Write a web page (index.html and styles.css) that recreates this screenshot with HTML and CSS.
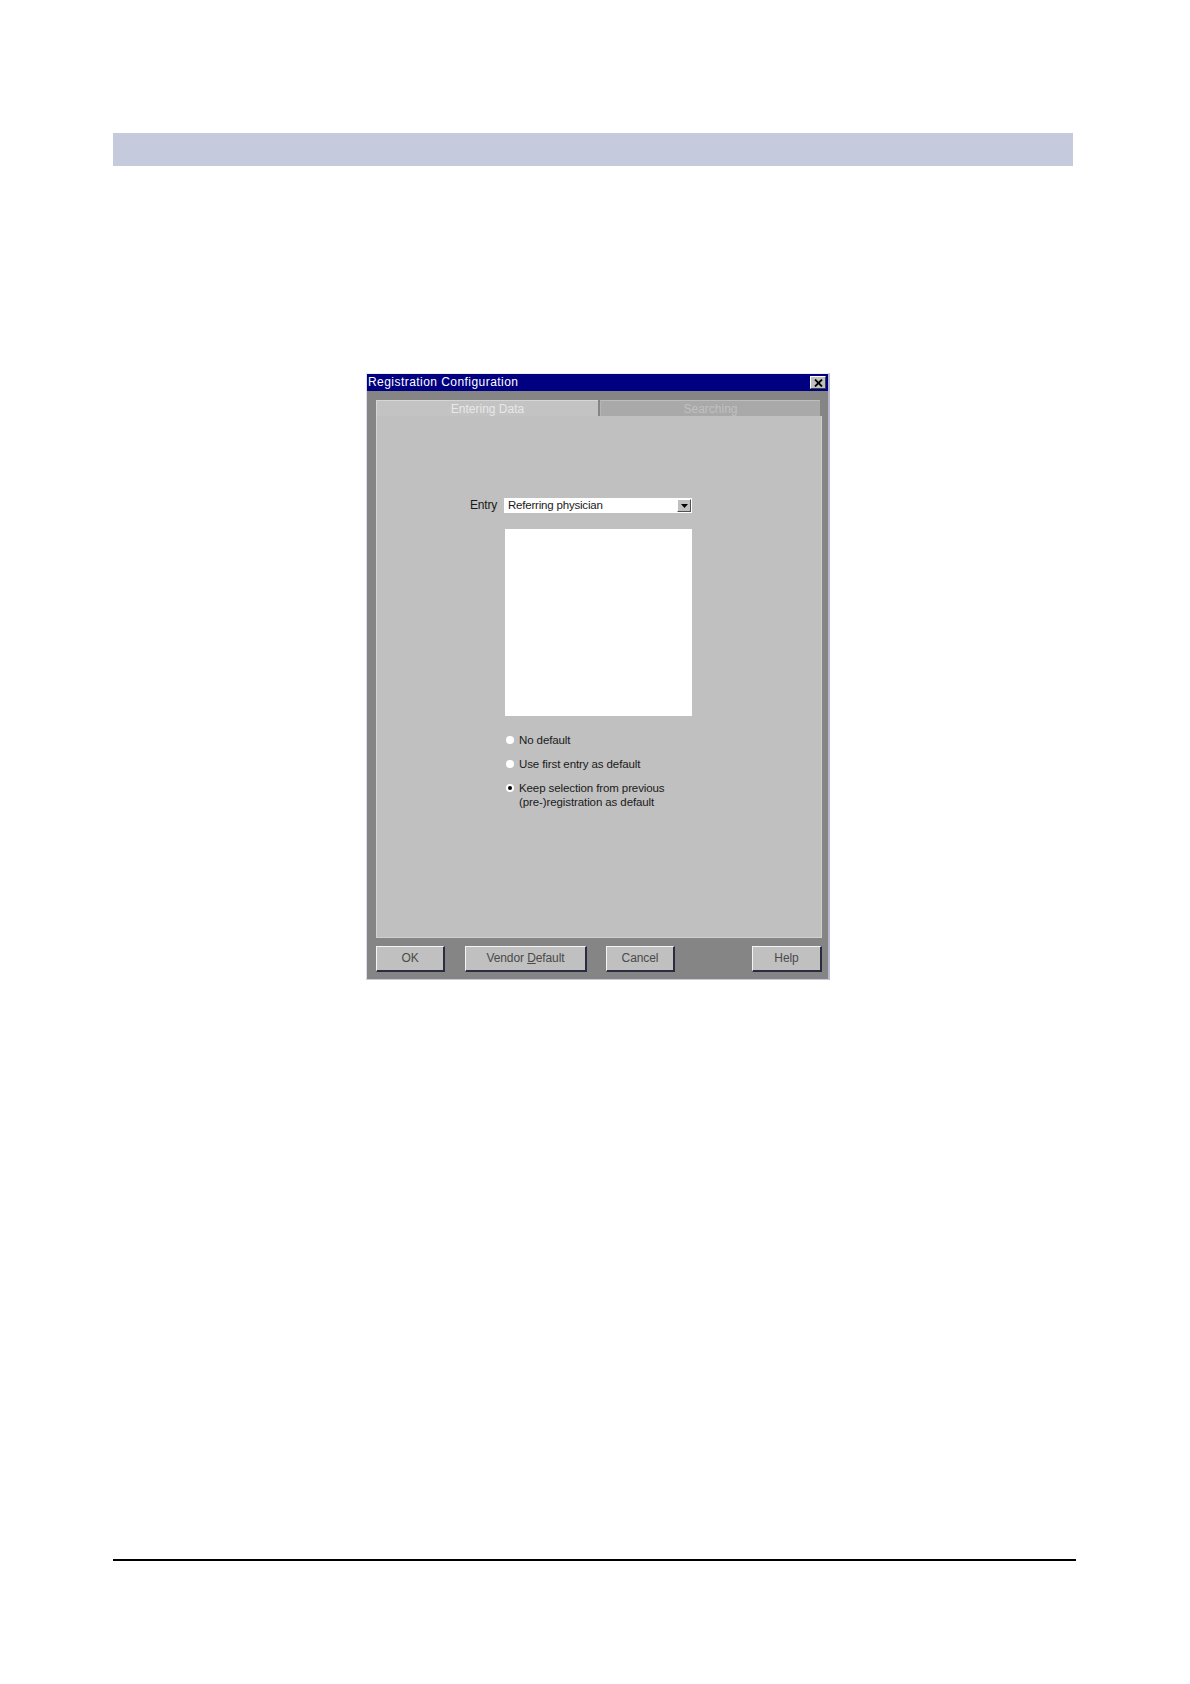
FILE: index.html
```html
<!DOCTYPE html>
<html>
<head>
<meta charset="utf-8">
<link rel="stylesheet" href="styles.css">
</head>
<body>
<div class="page">
  <div class="header-bar"></div>

  <div class="dialog">
    <div class="titlebar">
      <span class="title">Registration Configuration</span>
      <span class="close">
        <svg width="9" height="8" viewBox="0 0 9 8"><path d="M1 0.5 L8 7.5 M8 0.5 L1 7.5" stroke="#000" stroke-width="1.8" fill="none"/></svg>
      </span>
    </div>
    <div class="dlg-body">
      <div class="tabs">
        <div class="tab tab-active">Entering Data</div>
        <div class="tab tab-back">Searching</div>
      </div>
      <div class="panel">
        <div class="form">
          <label class="entry-label">Entry</label>
          <div class="combo">
            <span class="combo-text">Referring physician</span>
            <span class="drop">
              <svg width="7" height="4" viewBox="0 0 7 4"><path d="M0 0 H7 L3.5 4 Z" fill="#000"/></svg>
            </span>
          </div>
          <div class="listbox"></div>
          <div class="radios">
            <div class="radio"><span class="dot"></span><span class="rtext">No default</span></div>
            <div class="radio"><span class="dot"></span><span class="rtext">Use first entry as default</span></div>
            <div class="radio"><span class="dot dot-on"></span><span class="rtext">Keep selection from previous<br>(pre-)registration as default</span></div>
          </div>
        </div>
      </div>
      <div class="buttons">
        <div class="btn btn-ok">OK</div>
        <div class="btn btn-vendor">Vendor <u>D</u>efault</div>
        <div class="btn btn-cancel">Cancel</div>
        <div class="btn btn-help">Help</div>
      </div>
    </div>
  </div>

  <div class="footer-line"></div>
</div>
</body>
</html>
```

FILE: styles.css
```css
html, body {
  margin: 0;
  padding: 0;
  background: #ffffff;
  font-family: "Liberation Sans", Arial, sans-serif;
}

.page {
  padding-top: 133px;
  padding-left: 113px;
  width: 1077px;
  height: 1684px;
  box-sizing: border-box;
}

.header-bar {
  width: 960px;
  height: 33px;
  background: #c5cbdc;
}

.dialog {
  margin-top: 207px;
  margin-left: 253px;
  width: 464px;
  box-sizing: border-box;
  background: #858585;
  border-top: 1px solid #ececf4;
  border-left: 1px solid #dedeea;
  border-right: 2px solid #b8b8d0;
  border-bottom: 1px solid #c8c8dc;
}

.titlebar {
  height: 17px;
  background: #000080;
  display: flex;
  align-items: center;
  justify-content: space-between;
  padding: 0 2px 0 1px;
  color: #ffffff;
  font-size: 12px;
}

.title {
  line-height: 17px;
  letter-spacing: 0.45px;
}

.close {
  width: 14px;
  height: 11px;
  background: #c0c0c0;
  border-top: 1px solid #ffffff;
  border-left: 1px solid #ffffff;
  border-right: 1px solid #404040;
  border-bottom: 1px solid #404040;
  display: flex;
  align-items: center;
  justify-content: center;
}

.dlg-body {
  padding: 9px 6px 7px 9px;
}

.tabs {
  display: flex;
  height: 16px;
  gap: 2px;
  width: 444px;
}

.tab {
  box-sizing: border-box;
  height: 16px;
  font-size: 12px;
  line-height: 16px;
  text-align: center;
}

.tab-active {
  width: 222px;
  background: #c3c3c3;
  color: #e8e8e8;
  border-top: 1px solid #d6d6d6;
  border-left: 1px solid #d6d6d6;
}

.tab-back {
  width: 220px;
  background: #a9a9a9;
  color: #c0c0c0;
  border-top: 1px solid #bdbdbd;
  border-left: 1px solid #b5b5b5;
}

.panel {
  width: 446px;
  height: 522px;
  box-sizing: border-box;
  background: #c0c0c0;
  border-left: 1px solid #d4d4d4;
  border-right: 1px solid #d0d0d0;
  border-bottom: 1px solid #d0d0d0;
  padding-top: 82px;
}

.form {
  display: grid;
  grid-template-columns: 127px 188px;
  row-gap: 0;
  color: #1a1a1a;
  font-size: 12px;
}

.entry-label {
  justify-self: end;
  padding-right: 7px;
  line-height: 15px;
  letter-spacing: -0.2px;
}

.combo {
  width: 188px;
  height: 15px;
  background: #ffffff;
  display: flex;
  align-items: center;
  justify-content: space-between;
  box-sizing: border-box;
}

.combo-text {
  padding-left: 4px;
  font-size: 11.5px;
  line-height: 15px;
  letter-spacing: -0.2px;
}

.drop {
  width: 14px;
  height: 13px;
  box-sizing: border-box;
  margin-right: 1px;
  background: #c0c0c0;
  border-top: 1px solid #ffffff;
  border-left: 1px solid #ffffff;
  border-right: 1px solid #505050;
  border-bottom: 1px solid #505050;
  display: flex;
  align-items: center;
  justify-content: center;
}

.listbox {
  grid-column: 2;
  margin-top: 16px;
  margin-left: 1px;
  width: 187px;
  height: 187px;
  background: #ffffff;
}

.radios {
  grid-column: 2;
  margin-top: 17px;
  display: flex;
  flex-direction: column;
  gap: 10px;
}

.radio {
  display: flex;
  align-items: flex-start;
  font-size: 11.5px;
  line-height: 14px;
  letter-spacing: -0.1px;
}

.dot {
  width: 8px;
  height: 8px;
  border-radius: 50%;
  background: #ffffff;
  margin: 3px 5px 0 2px;
  flex: none;
  display: flex;
  align-items: center;
  justify-content: center;
}

.dot-on::after {
  content: "";
  width: 4px;
  height: 4px;
  border-radius: 50%;
  background: #000000;
}

.buttons {
  display: flex;
  margin-top: 8px;
  height: 26px;
}

.btn {
  box-sizing: border-box;
  height: 26px;
  background: #c0c0c0;
  border-top: 1px solid #f4f4f4;
  border-left: 1px solid #f4f4f4;
  border-right: 2px solid #2c2c40;
  border-bottom: 2px solid #2c2c40;
  color: #4a4a4a;
  font-size: 12px;
  line-height: 23px;
  text-align: center;
  letter-spacing: -0.1px;
}

.btn-ok { width: 69px; }
.btn-vendor { width: 122px; margin-left: 20px; }
.btn-cancel { width: 69px; margin-left: 19px; }
.btn-help { width: 70px; margin-left: 77px; }

.footer-line {
  margin-top: 579px;
  width: 963px;
  height: 2px;
  background: #000000;
}
```
